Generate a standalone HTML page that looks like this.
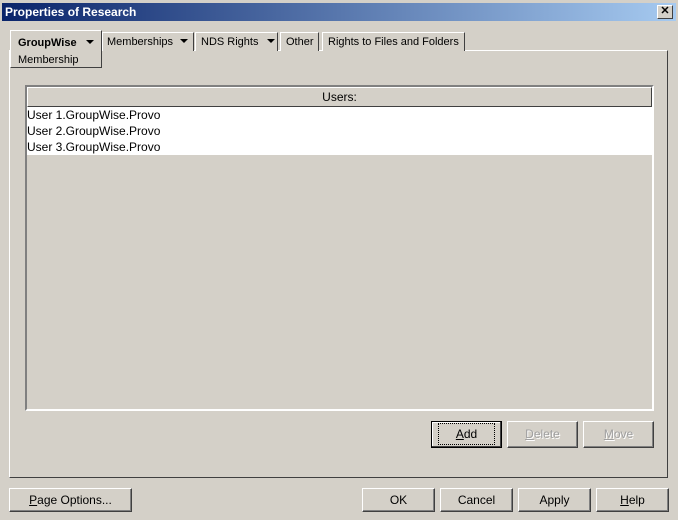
<!DOCTYPE html>
<html><head><style>
*{box-sizing:border-box;margin:0;padding:0}
body{width:678px;height:520px;background:#d4d0c8;font-family:"Liberation Sans",sans-serif;font-size:12px;position:relative;overflow:hidden;color:#000}
.a{position:absolute}
.title{left:0;top:0;width:678px;height:22px;border:1px solid #d4d0c8;border-bottom:none}
.tb{left:2px;top:3px;width:674px;height:18px;background:linear-gradient(90deg,#0a246a,#a6caf0);color:#fff;font-weight:bold;font-size:12px;padding:2px 3px}
.close{left:657px;top:5px;width:16px;height:14px;background:#d4d0c8;border:1px solid;border-color:#fff #404040 #404040 #fff;font-size:11px;line-height:11px;text-align:center;color:#000;font-weight:bold}
.panel{left:9px;top:50px;width:659px;height:428px;border:1px solid;border-color:#fff #404040 #404040 #fff}
.tab{top:32px;height:19px;border:1px solid;border-bottom:none;border-color:#fff #404040 #404040 #fff;font-size:11px;padding:3px 5px;white-space:nowrap;background:#d4d0c8}
.arr{display:inline-block;width:0;height:0;border-left:4px solid transparent;border-right:4px solid transparent;border-top:4px solid #000;margin-left:6px;vertical-align:2px}
.btn{height:27px;border:1px solid;border-color:#fff #404040 #404040 #fff;box-shadow:inset -1px -1px #808080;text-align:center;font-size:12px;line-height:25px}
.dis{color:#a0a0a0;text-shadow:1px 1px #fff}
</style></head><body>
<div class="a title"></div>
<div class="a tb">Properties of Research</div>
<div class="a close">✕</div>
<div class="a panel"></div>
<div class="a tab" style="left:102px;width:92px;padding-left:4px">Memberships<span class="arr" style="margin-left:7px"></span></div>
<div class="a tab" style="left:195px;width:83px">NDS Rights<span class="arr" style="margin-left:9px"></span></div>
<div class="a tab" style="left:280px;width:39px">Other</div>
<div class="a tab" style="left:322px;width:143px">Rights to Files and Folders</div>
<div class="a" style="left:10px;top:30px;width:92px;height:38px;border:1px solid;border-color:#fff #404040 #404040 #fff;background:#d4d0c8;font-size:11px;padding:4px 7px;line-height:17px;white-space:nowrap"><b style="font-size:11px">GroupWise</b><span class="arr" style="margin-left:9px"></span><br>Membership</div>
<div class="a" style="left:25px;top:85px;width:629px;height:326px;border:2px solid;border-color:#808080 #fff #fff #808080;background:#d4d0c8">
 <div class="a" style="left:0;top:0;width:625px;height:20px;border:1px solid;border-color:#fff #404040 #404040 #fff;text-align:center;line-height:18px">Users:</div>
 <div class="a" style="left:0;top:20px;width:625px;height:48px;background:#fff;line-height:16px;padding-left:0">User 1.GroupWise.Provo<br>User 2.GroupWise.Provo<br>User 3.GroupWise.Provo</div>
</div>
<div class="a btn" style="left:431px;top:421px;width:71px;border-color:#000;box-shadow:inset -1px -1px #404040,inset 1px 1px #fff"><span style="border:1px dotted #000;padding:3px 17px"><u>A</u>dd</span></div>
<div class="a btn dis" style="left:507px;top:421px;width:71px"><u>D</u>elete</div>
<div class="a btn dis" style="left:583px;top:421px;width:71px"><u>M</u>ove</div>
<div class="a btn" style="left:9px;top:488px;width:123px;height:24px;line-height:22px"><u>P</u>age Options...</div>
<div class="a btn" style="left:362px;top:488px;width:73px;height:24px;line-height:22px">OK</div>
<div class="a btn" style="left:440px;top:488px;width:73px;height:24px;line-height:22px">Cancel</div>
<div class="a btn" style="left:518px;top:488px;width:73px;height:24px;line-height:22px">Apply</div>
<div class="a btn" style="left:596px;top:488px;width:73px;height:24px;line-height:22px"><u>H</u>elp</div>
</body></html>
